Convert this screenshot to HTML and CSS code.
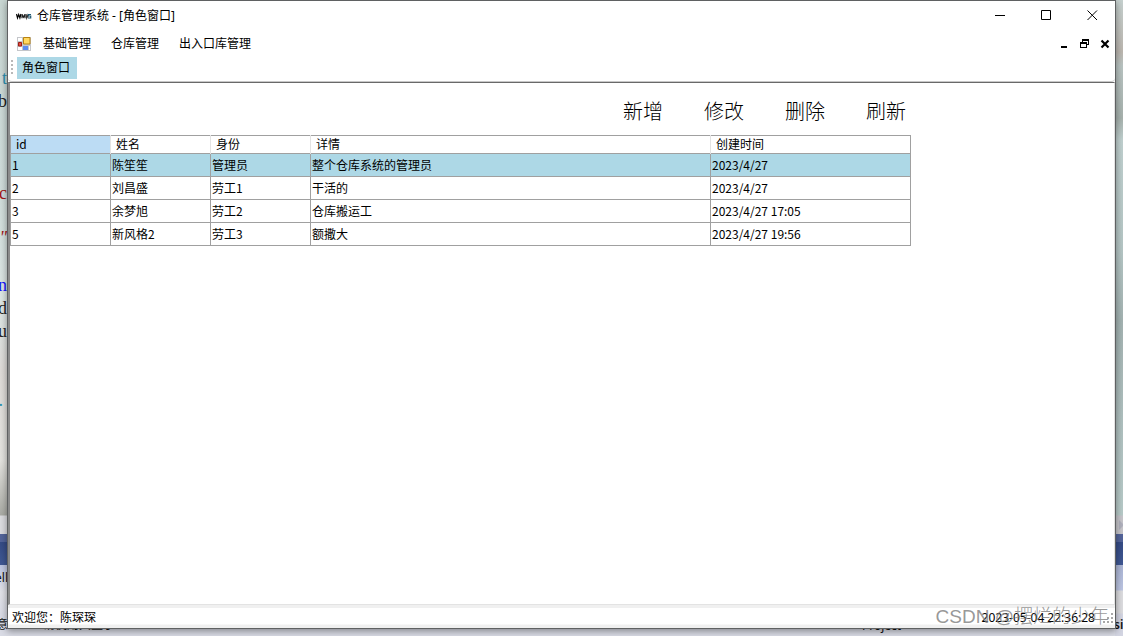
FILE: index.html
```html
<!DOCTYPE html>
<html lang="zh-CN">
<head>
<meta charset="utf-8">
<title>仓库管理系统 - [角色窗口]</title>
<link rel="stylesheet" href="styles.css">
</head>
<body>
<div class="desktop" aria-hidden="true">
  <div class="edge edge-left"></div>
  <div class="edge edge-right"><svg class="scroll-arrow" width="6" height="12" viewBox="0 0 6 12"><path d="M0 1l5 5-5 5z" fill="#b0b1bd"/></svg></div>
  <span class="code teal c1">t</span>
  <span class="code c2">b</span>
  <span class="code red c3">c</span>
  <span class="code red c4">"</span>
  <span class="code blue c5">n</span>
  <span class="code c6">d</span>
  <span class="code c7">u</span>
  <span class="code teal c8">.</span>
  <span class="back b1">ell</span>
  <span class="back b2">意</span>
  <span class="back b3">请使用大型于 now.</span>
  <span class="back b4">Project</span>
  <span class="back b5">CustomControls</span>
  <span class="back b6">si</span>
</div>
<div class="window">
  <header class="titlebar">
    <svg class="logo" width="16" height="16" viewBox="0 0 16 16" fill="none" stroke-width="1.200"><path d="M.5 6l1 4 1.200-3.500L3.900 10l1-4" stroke="#000"/><path d="M6 10.200V6.200l1.500 3 1.500-3v4" stroke="#222"/><path d="M10 6l.7 4 1-2.500.3 2" stroke="#333"/><path d="M15 6.500h-2.500v1.500h2.200v2h-2.700" stroke="#1d5670"/></svg>
    <h1 class="title">仓库管理系统 - [角色窗口]</h1>
    <div class="caption">
      <button class="cap" aria-label="最小化"><svg width="11" height="11" viewBox="0 0 11 11"><path d="M0 5.500h10" stroke="#000"/></svg></button>
      <button class="cap" aria-label="最大化"><svg width="11" height="11" viewBox="0 0 11 11"><path d="M.5.5h9v9h-9z" fill="none" stroke="#000"/></svg></button>
      <button class="cap" aria-label="关闭"><svg width="11" height="11" viewBox="0 0 11 11"><path d="M.5.5l9.500 9.500M10 .5L.5 10" stroke="#000" fill="none"/></svg></button>
    </div>
  </header>
  <nav class="menubar">
    <svg class="form-icon" width="14" height="14" viewBox="0 0 14 14"><path d="M0 0h14v14H0z" fill="#c4c6ca"/><path d="M1 1h4v3H1zM1 10h4v3H1z" fill="#fff"/><path d="M1.500 5.500h3v3.500h-3z" fill="#e0503e" stroke="#a01c14"/><path d="M6.500.5h6.500v6.500H6.500z" fill="#ffd860" stroke="#b98211"/><path d="M6 9h5v4H6z" fill="#5c8cf0"/><path d="M12 9h1v4h-1z" fill="#fff"/></svg>
    <button class="menu">基础管理</button>
    <button class="menu">仓库管理</button>
    <button class="menu">出入口库管理</button>
    <div class="mdi">
      <button class="mdi-btn" aria-label="最小化子窗口"><svg width="10" height="10" viewBox="0 0 10 10"><path d="M1 7h6v2H1z"/></svg></button>
      <button class="mdi-btn" aria-label="还原子窗口"><svg width="10" height="10" viewBox="0 0 10 10" shape-rendering="crispEdges"><path d="M2 0h7v6H7V5h1V2H3v1H2zM0 3h7v6H0zM1 5v3h5V5z" fill-rule="evenodd"/></svg></button>
      <button class="mdi-btn" aria-label="关闭子窗口"><svg width="10" height="10" viewBox="0 0 10 10"><path d="M1.500 1.500l7 7M8.500 1.500l-7 7" stroke="#000" stroke-width="2.200"/></svg></button>
    </div>
  </nav>
  <div class="tabs"><i class="grip"></i><button class="tab">角色窗口</button></div>
  <main class="client">
    <div class="actions">
      <button class="action">新增</button>
      <button class="action">修改</button>
      <button class="action">删除</button>
      <button class="action">刷新</button>
    </div>
    <table class="grid">
      <colgroup><col class="narrow"><col class="narrow"><col class="narrow"><col class="wide"><col class="medium"></colgroup>
      <thead><tr><th class="sorted">id</th><th>姓名</th><th>身份</th><th>详情</th><th>创建时间</th></tr></thead>
      <tbody>
        <tr class="selected"><td>1</td><td>陈笙笙</td><td>管理员</td><td>整个仓库系统的管理员</td><td>2023/4/27</td></tr>
        <tr><td>2</td><td>刘昌盛</td><td>劳工1</td><td>干活的</td><td>2023/4/27</td></tr>
        <tr><td>3</td><td>余梦旭</td><td>劳工2</td><td>仓库搬运工</td><td>2023/4/27 17:05</td></tr>
        <tr><td>5</td><td>新风格2</td><td>劳工3</td><td>额撒大</td><td>2023/4/27 19:56</td></tr>
      </tbody>
    </table>
  </main>
  <footer class="status">
    <span>欢迎您：陈琛琛</span>
    <time class="clock">2023-05-04 22:36:28</time>
    <svg width="10" height="10" viewBox="0 0 10 10" fill="#a8a8a8"><path d="M8 0h2v2H8zM4 4h2v2H4zM8 4h2v2H8zM0 8h2v2H0zM4 8h2v2H4zM8 8h2v2H8z"/></svg>
  </footer>
</div>
<div class="watermark">CSDN @摆烂的少年</div>
</body>
</html>
```
FILE: styles.css
```css
* { box-sizing: border-box; }
body {
  margin: 0;
  height: 100vh;
  padding: 0 7px 7px 7px;
  overflow: hidden;
  position: relative;
  display: flex;
  font: 12px/16px "Noto Sans", "Noto Sans CJK SC", sans-serif;
  color: #000;
  background: #d9dbe5;
}
button {
  border: 0;
  padding: 0;
  background: none;
  font: inherit;
  color: inherit;
}
svg { display: block; flex: none; }

.desktop { position: absolute; inset: 0; overflow: hidden; }
.edge { position: absolute; top: 0; bottom: 0; width: 8px; }
.edge-left {
  left: 0;
  background: linear-gradient(#c8d6d2 0, #d0dddb 200px, #dde6e4 300px, #dedbd8 370px, #e4e3df 460px, #aaaba5 515px, #dcdce0 516px, #dcdce0 534px, #53649a 534px, #53649a 542px, #354b85 542px, #405894 565px, #bcc5e2 565px, #e2e2e8 592px, #d9dbe5 614px);
}
.edge-right {
  right: 0;
  background: linear-gradient(#c6d1cf 0, #bcb7b0 52px, #b9c4c2 66px, #a7b2ae 118px, #c0d0cf 140px, #b5c6c5 250px, #a3b3b2 320px, #afc0bf 420px, #b7cac8 515px, #c6c5ca 516px, #c6c5ca 534px, #53649a 534px, #53649a 542px, #354b85 542px, #405894 565px, #aab4d4 565px, #bcc5e2 590px, #dcdcdf 591px, #dcdcdf 613px, #d3d5e2 614px);
}
.scroll-arrow { position: absolute; left: 4px; top: 519px; }
.code { position: absolute; font: 18px/20px "Liberation Serif", serif; right: calc(100% - 7px); color: #222; }
.red { color: #a31515; }
.blue { color: #1414ff; }
.teal { color: #2b91af; }
.c1 { top: 68px; }
.c2 { top: 91px; }
.c3 { top: 183px; }
.c4 { top: 228px; font-style: italic; }
.c5 { top: 275px; }
.c6 { top: 298px; }
.c7 { top: 321px; }
.c8 { top: 390px; right: calc(100% - 3px); }
.back { position: absolute; color: #111; white-space: nowrap; }
.b1 { top: 570px; right: calc(100% - 8px); }
.b2 { top: 617px; left: -4px; }
.b3 { top: 617px; left: 43px; }
.b4 { top: 618px; left: 862px; }
.b5 { top: 617px; left: 1011px; }
.b6 { top: 617px; left: 1114px; font-weight: 600; }

.window {
  position: relative;
  flex: 1;
  display: flex;
  flex-direction: column;
  background: #fff;
  border: 1px solid #5f6162;
  box-shadow: 0 2px 7px rgba(0, 0, 0, .4);
}
.titlebar { height: 29px; display: flex; align-items: center; padding-left: 8px; gap: 5px; }
.title { margin: 0; font-size: 12px; font-weight: 400; }
.caption { margin-left: auto; display: flex; height: 100%; }
.cap { width: 46px; display: flex; align-items: center; justify-content: center; }
.menubar { height: 26px; display: flex; align-items: center; padding: 2px 0 0 9px; }
.form-icon { margin-right: 12px; }
.menu { margin-right: 20px; }
.mdi { margin-left: auto; display: flex; gap: 10px; padding-right: 5px; }
.mdi-btn { display: block; }
.tabs { height: 26px; display: flex; align-items: flex-start; padding: 1px 0 0 3px; gap: 4px; border-bottom: 1px solid #c8c8c8; border-radius: 0 0 4px 4px; }
.grip { width: 2px; height: 14px; margin-top: 3px; background: repeating-linear-gradient(#b9b9b9 0 2px, #fff 2px 4px); }
.tab { width: 60px; height: 22px; padding-right: 2px; background: #add8e6; }

.client {
  flex: 1;
  display: flex;
  flex-direction: column;
  border: 1px solid #696969;
  border-right-color: #e3e3e3;
  border-bottom-color: #e3e3e3;
  border-left: 2px solid #8b8b8b;
}
.actions { width: 900px; display: flex; justify-content: flex-end; gap: 41px; padding: 14px 4px 8px 0; }
.action { font-size: 20px; line-height: 30px; font-weight: 300; }

.grid {
  width: 901px;
  table-layout: fixed;
  border-collapse: collapse;
  font-family: "Noto Sans CJK SC", sans-serif;
  border: 1px solid #a0a0a0;
}
.narrow { width: 100px; }
.wide { width: 400px; }
.medium { width: 200px; }
.grid th { height: 18px; padding: 0 0 1px 5px; text-align: left; font-weight: 400; border-left: 1px solid #e3e3e3; }
.grid .sorted { background: #bcdcf4; border-left-color: #a0a0a0; }
.grid td { height: 23px; padding: 0 0 0 1px; border: 1px solid #a0a0a0; }
.selected { background: #add8e6; }

.status {
  height: 23px;
  display: flex;
  align-items: center;
  padding: 3px 2px 0 4px;
  background: linear-gradient(#f0f0f0 3px, #fff 3px, #fff 19px, #f0f0f0 20px);
}
.clock { margin-left: auto; margin-right: 8px; }
.watermark {
  position: absolute;
  right: 14px;
  bottom: 6px;
  font: 19px/26px "Liberation Sans", "Noto Sans CJK SC", sans-serif;
  font-weight: 300;
  color: rgba(125, 125, 125, .8);
}
```
